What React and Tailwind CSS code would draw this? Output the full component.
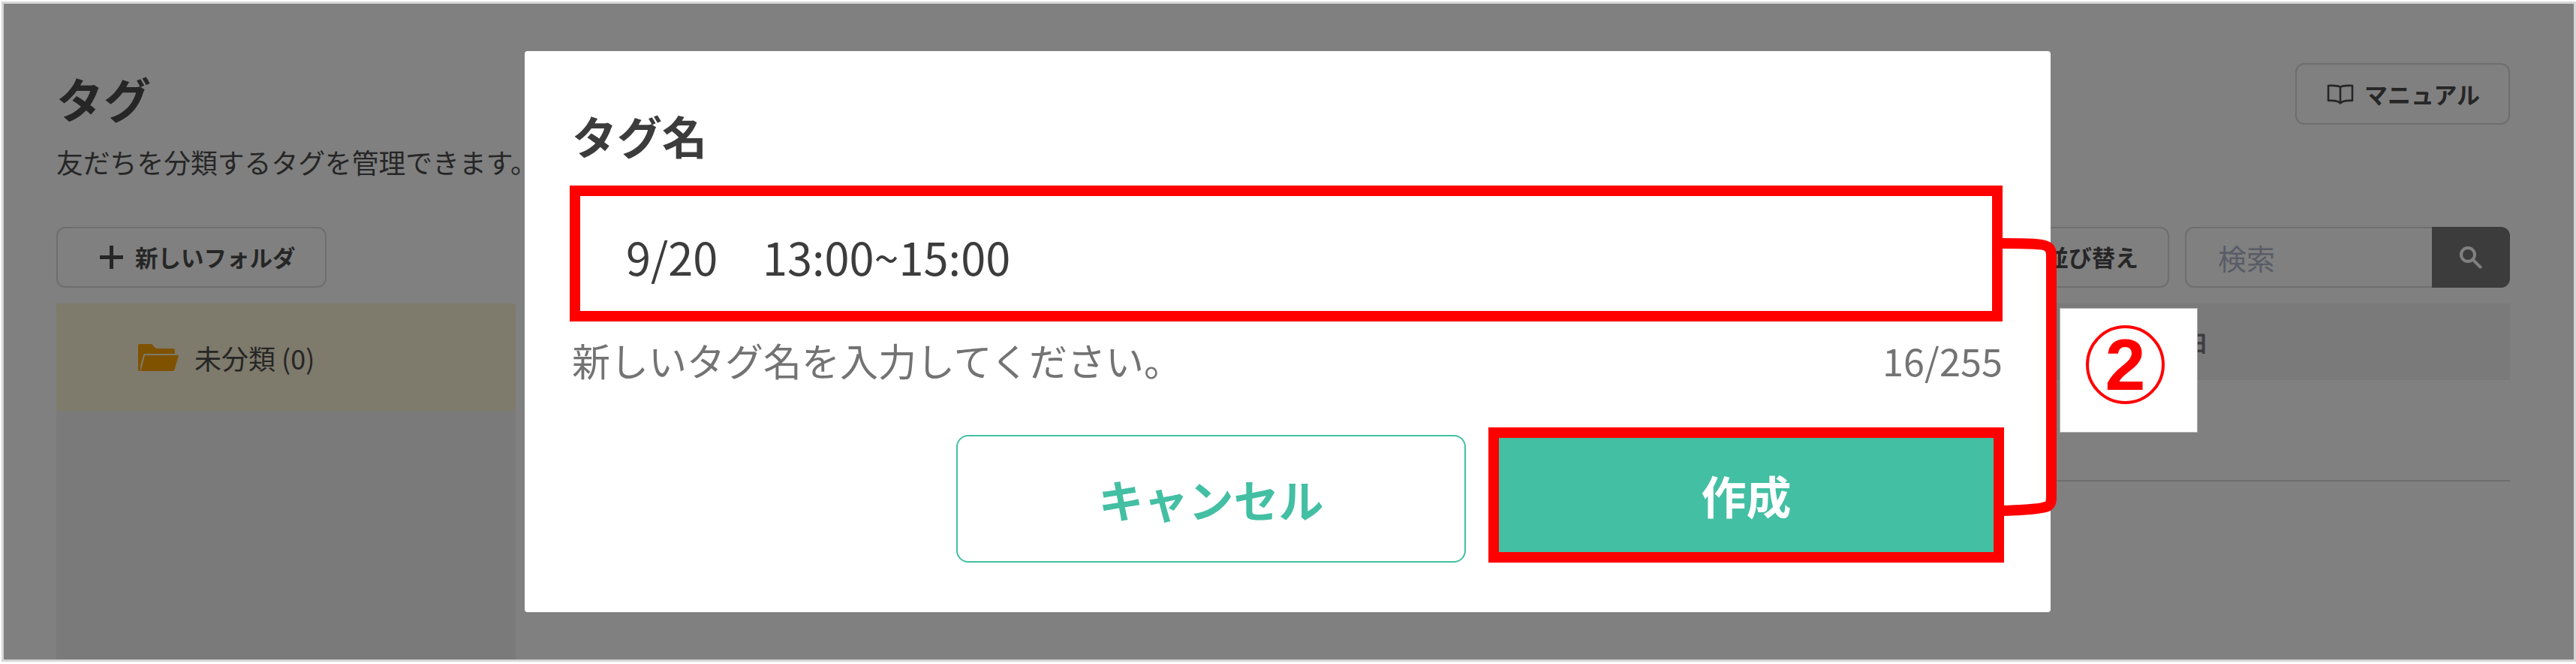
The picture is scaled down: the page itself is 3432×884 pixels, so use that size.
import React from "react";

const FONT = "font-['Noto_Sans_CJK_JP','Noto_Sans',sans-serif]";

function PlusIcon() {
  return (
    <svg viewBox="0 0 31 31" className="w-[31px] h-[31px] shrink-0">
      <path d="M15.5 0V31M0 15.5H31" stroke="#262626" strokeWidth="5" fill="none" />
    </svg>
  );
}

function BookIcon() {
  return (
    <svg viewBox="0 0 36 27" className="w-[36px] h-[27px] shrink-0">
      <path
        d="M18 4C15 2 11 1.5 2 2V22C10 21.5 15 22 18 25.5C21 22 26 21.5 34 22V2C25 1.5 21 2 18 4V25"
        stroke="#262626"
        strokeWidth="2.6"
        fill="none"
        strokeLinejoin="round"
      />
    </svg>
  );
}

function SearchIcon() {
  return (
    <svg viewBox="0 0 30 30" className="w-[30px] h-[30px] shrink-0">
      <circle cx="11" cy="11" r="9" stroke="#808080" strokeWidth="4" fill="none" />
      <path d="M17.5 17.5L27.5 27.5" stroke="#808080" strokeWidth="4" strokeLinecap="round" fill="none" />
    </svg>
  );
}

function FolderIcon() {
  return (
    <svg viewBox="0 0 54 37" className="w-[54px] h-[37px] shrink-0">
      <path
        d="M0 3A2 2 0 0 1 2 1H18L24 7H46A3 3 0 0 1 49 10V14H7.5L3 30V37H2A2 2 0 0 1 0 35Z"
        fill="#7f5200"
      />
      <path d="M9 16H54L48.5 35A3 3 0 0 1 46 37H3.5Z" fill="#7f5200" />
    </svg>
  );
}

function Bracket() {
  return (
    <svg
      viewBox="0 0 75 376"
      className="absolute left-[2668px] top-[315px] w-[75px] h-[376px]"
    >
      <path
        d="M0 9C30 9 58 9 62 15C65 18 65 22 65 26V345C65 352 65 356 60 359C54 362 30 364 0 365"
        stroke="#ff0000"
        strokeWidth="14"
        fill="none"
      />
    </svg>
  );
}

function Background() {
  return (
    <div className="w-full h-full bg-[#808080] border-[3px] border-[#d6d6d6] flex flex-col pl-[70px] pr-[85px] pt-[79px] text-[#262626]">
      <header className="flex items-start justify-between">
        <div className="pt-[14px]">
          <h1 className="text-[63px] leading-[63px] font-bold">タグ</h1>
          <p className="mt-[36px] text-[35.8px] leading-[36px]">
            友だちを分類するタグを管理できます。
          </p>
        </div>
        <button className="w-[286px] h-[82px] border-2 border-[#6e6e6e] rounded-[12px] flex items-center pl-[40px] gap-[14px] text-[31px] font-bold">
          <BookIcon />
          マニュアル
        </button>
      </header>

      <div className="mt-[69px] flex items-center justify-between">
        <button className="w-[360px] h-[81px] border-2 border-[#6e6e6e] rounded-[12px] flex items-center pl-[56px] gap-[16px] text-[30.5px] font-bold">
          <PlusIcon />
          新しいフォルダ
        </button>
        <div className="flex items-center gap-[21px]">
          <button className="w-[212px] h-[81px] border-2 border-[#6e6e6e] rounded-[12px] flex items-center justify-end pr-[39px] text-[31px] font-bold">
            並び替え
          </button>
          <div className="w-[433px] h-[81px] flex">
            <span className="flex-1 border-y-2 border-l-2 border-[#6e6e6e] rounded-l-[12px] flex items-center pl-[42px] text-[38px] text-[#595c66]">
              検索
            </span>
            <span className="w-[104px] bg-[#3c3c3c] rounded-r-[12px] flex items-center justify-center">
              <SearchIcon />
            </span>
          </div>
        </div>
      </div>

      <div className="mt-[21px] flex-1 flex">
        <aside className="w-[612px] bg-[#7a7a7b]">
          <div className="h-[143px] bg-[#7e7a6c] flex items-center gap-[21px] pl-[109px] text-[36px]">
            <FolderIcon />
            未分類 (0)
          </div>
        </aside>
        <section className="flex-1 ml-[13px]">
          <div className="h-[102px] bg-[#7a7a7b] flex items-center pl-[2152px] text-[30px] font-bold text-[#3e3e3e] whitespace-nowrap">
            作成日
          </div>
          <div className="h-[135px] border-b-2 border-[#6e6e6e]" />
        </section>
      </div>
    </div>
  );
}

function Modal() {
  return (
    <div className="absolute left-[699px] top-[68px] w-[2033px] h-[747px] bg-white rounded-[4px] pl-[60px] pr-[64px] pt-[82px] text-[#3c3c3c]">
      <h2 className="pl-[3px] text-[60px] leading-[60px] font-bold">タグ名</h2>
      <div className="mt-[37px] h-[181px] border-[14px] border-[#ff0000] flex items-center pl-[61px] pt-[8px] text-[59.5px]">
        9/20　13:00~15:00
      </div>
      <div className="mt-[26px] pl-[3px] flex items-center justify-between leading-[50px] text-[#737373]">
        <span className="text-[51px]">新しいタグ名を入力してください。</span>
        <span className="text-[50.5px]">16/255</span>
      </div>
      <div className="mt-[65px] -mr-[2px] flex items-end justify-end gap-[30px]">
        <button className="w-[679px] h-[170px] border-2 border-[#43bfa3] rounded-[16px] text-[60px] font-bold text-[#43bfa3]">
          キャンセル
        </button>
        <button className="w-[687px] h-[180px] border-[14px] border-[#ff0000] bg-[#43bfa3] text-[60px] font-bold text-white">
          作成
        </button>
      </div>
    </div>
  );
}

function Callout() {
  return (
    <div className="absolute left-[2744px] top-[410px] w-[184px] h-[166px] bg-white border border-[#b0b0b0] pl-[34px] pt-[22px]" aria-label="②">
      <div className="w-[105px] h-[105px] rounded-full border-4 border-[#ff0000] flex items-center justify-center">
        <span className="font-['Liberation_Sans',sans-serif] text-[97px] leading-[97px] font-bold text-[#ff0000]">2</span>
      </div>
    </div>
  );
}

export default function App() {
  return (
    <div className={`relative w-[3432px] h-[884px] overflow-hidden bg-white pl-[2px] pt-[2px] pb-[3px] ${FONT}`}>
      <Background />
      <Modal />
      <Bracket />
      <Callout />
    </div>
  );
}
